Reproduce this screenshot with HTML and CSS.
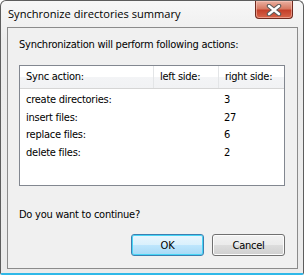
FILE: index.html
```html
<!DOCTYPE html>
<html lang="en">
<head>
  <meta charset="UTF-8" />
  <title>Synchronize directories summary</title>
  <link rel="stylesheet" href="styles.css">
</head>
<body>
  <div class="window">
    <div class="titlebar">
      <span class="title">Synchronize directories summary</span>
      <button class="close" aria-label="Close">
        <svg width="18" height="12" viewBox="0 0 18 12">
          <path d="M4 2 L14 10 M14 2 L4 10" stroke="#5a5a5a" stroke-width="4.5" stroke-linecap="round"/>
          <path d="M4 2 L14 10 M14 2 L4 10" stroke="#ffffff" stroke-width="2.4" stroke-linecap="round"/>
        </svg>
      </button>
    </div>

    <div class="client">
      <p class="intro">Synchronization will perform following actions:</p>

      <div class="listbox">
        <div class="row header">
          <span class="col-action">Sync action:</span>
          <span class="col-left">left side:</span>
          <span class="col-right">right side:</span>
        </div>
        <div class="rows">
          <div class="row">
            <span class="col-action">create directories:</span>
            <span class="col-left"></span>
            <span class="col-right">3</span>
          </div>
          <div class="row">
            <span class="col-action">insert files:</span>
            <span class="col-left"></span>
            <span class="col-right">27</span>
          </div>
          <div class="row">
            <span class="col-action">replace files:</span>
            <span class="col-left"></span>
            <span class="col-right">6</span>
          </div>
          <div class="row">
            <span class="col-action">delete files:</span>
            <span class="col-left"></span>
            <span class="col-right">2</span>
          </div>
        </div>
      </div>

      <p class="question">Do you want to continue?</p>

      <div class="buttons">
        <button class="btn default">OK</button>
        <button class="btn">Cancel</button>
      </div>
    </div>
  </div>
</body>
</html>
```

FILE: styles.css
```css
body {
  margin: 0;
  padding: 0;
  font-family: "DejaVu Sans Condensed", "DejaVu Sans", sans-serif;
  font-stretch: condensed;
  font-size: 11px;
  letter-spacing: -0.25px;
  color: #000;
  background: #ffffff;
}

.window {
  width: 304px;
  height: 275px;
  box-sizing: border-box;
  border: 1px solid #5d5d5d;
  border-bottom: 2px solid #2fb8e8;
  border-radius: 6px 6px 2px 2px;
  background: linear-gradient(#f7f7f7, #ececec 40px, #ebebeb);
  display: flex;
  flex-direction: column;
}

.titlebar {
  height: 26px;
  display: flex;
  align-items: flex-start;
  padding-left: 7px;
}

.title {
  font-family: "Open Sans", sans-serif;
  font-stretch: normal;
  font-size: 11.1px;
  letter-spacing: 0;
  line-height: 26px;
  color: #000;
}

.close {
  margin-left: auto;
  margin-right: 10px;
  width: 38px;
  height: 18px;
  padding: 0;
  border: 1px solid #6f2a1f;
  border-top: none;
  border-radius: 0 0 4px 4px;
  background: linear-gradient(#eab1a2, #d77a63 45%, #c4402a 55%, #d7654a);
  box-shadow: inset 0 0 0 1px rgba(255, 210, 200, 0.5);
  display: flex;
  align-items: center;
  justify-content: center;
}

.client {
  flex: 1;
  margin: 0 5px 4px 6px;
  border: 1px solid #8b8b8b;
  background: #f0f0f0;
  padding: 10px 12px 12px 11px;
  display: flex;
  flex-direction: column;
}

.intro,
.question {
  margin: 0;
  line-height: 13px;
}

.listbox {
  margin-top: 14px;
  height: 119px;
  border: 1px solid #828790;
  background: #ffffff;
}

.row {
  display: flex;
  height: 17.5px;
  line-height: 17px;
}

.row span {
  padding-left: 6px;
  box-sizing: border-box;
}

.col-action { width: 133px; }
.col-left { width: 65px; }
.col-right { flex: 1; }

.header {
  height: 22px;
  line-height: 22px;
  background: linear-gradient(#ffffff, #ffffff 50%, #f3f4f6 50%, #f1f2f4);
  border-bottom: 1px solid #d5d5d5;
}

.header span {
  border-right: 1px solid #e3e5e7;
}

.header .col-action { width: 134px; }
.header .col-left { width: 65px; }
.header .col-right { border-right: none; }

.rows {
  padding-top: 2px;
}

.question {
  margin-top: 22px;
}

.buttons {
  margin-top: 13px;
  display: flex;
  justify-content: flex-end;
  gap: 8px;
}

.btn {
  width: 73px;
  height: 22px;
  padding: 0;
  font-family: inherit;
  font-stretch: inherit;
  font-size: 11px;
  letter-spacing: inherit;
  color: #000;
  border: 1px solid #707070;
  border-radius: 3px;
  background: linear-gradient(#f2f2f2, #ebebeb 50%, #dddddd 50%, #cfcfcf);
  box-shadow: inset 0 0 0 1px #fcfcfc;
}

.btn.default {
  border-color: #3c7fb1;
  background: linear-gradient(#eaf6fd, #d9f0fc 50%, #bee6fd 50%, #a7d9f5);
  box-shadow: inset 0 0 0 1px #48d5f6;
}
```
